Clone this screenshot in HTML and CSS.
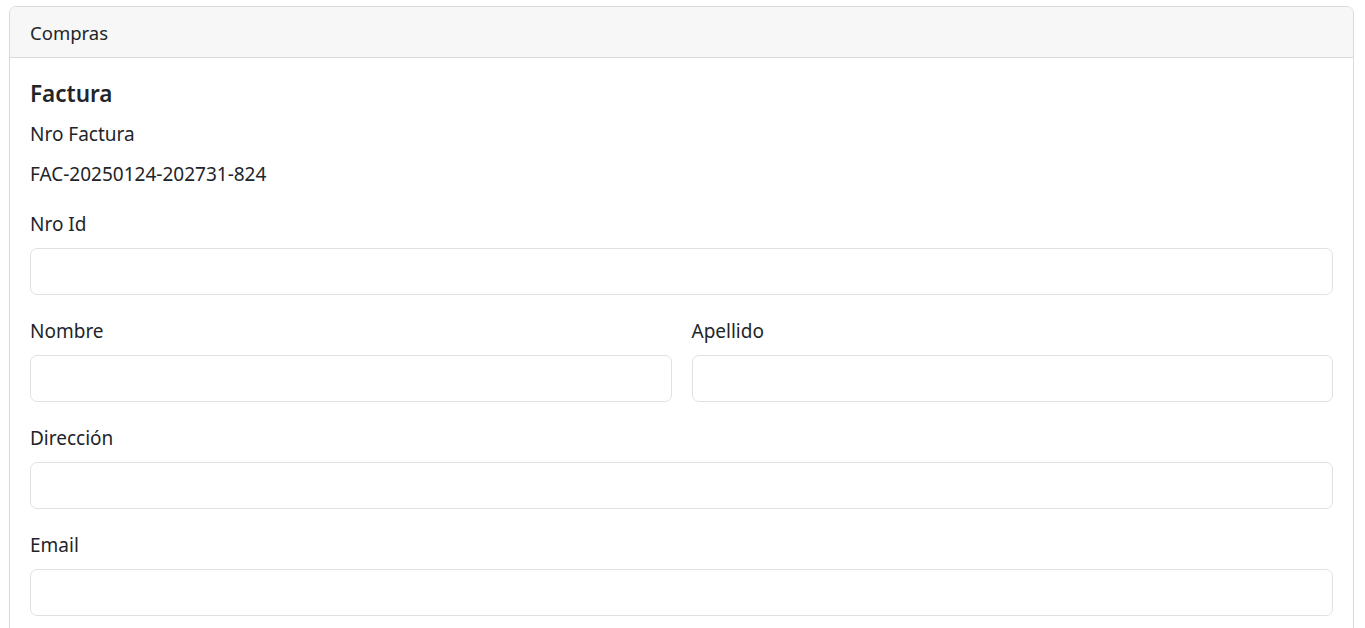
FILE: index.html
```html
<!DOCTYPE html>
<html lang="es">
<head>
<meta charset="utf-8">
<title>Compras</title>
<link rel="stylesheet" href="styles.css">
</head>
<body>
<div class="card">
  <div class="card-header">Compras</div>
  <div class="card-body">
    <h5 class="card-title">Factura</h5>
    <div class="form-label">Nro Factura</div>
    <p class="invoice">FAC-20250124-202731-824</p>
    <div class="field">
      <label class="form-label" for="nroid">Nro Id</label>
      <input class="form-control" id="nroid" type="text">
    </div>
    <div class="row field">
      <div class="col">
        <label class="form-label" for="nombre">Nombre</label>
        <input class="form-control" id="nombre" type="text">
      </div>
      <div class="col">
        <label class="form-label" for="apellido">Apellido</label>
        <input class="form-control" id="apellido" type="text">
      </div>
    </div>
    <div class="field">
      <label class="form-label" for="direccion">Dirección</label>
      <input class="form-control" id="direccion" type="text">
    </div>
    <div class="field">
      <label class="form-label" for="email">Email</label>
      <input class="form-control" id="email" type="email">
    </div>
  </div>
</div>
</body>
</html>
```
FILE: styles.css
```css
* { box-sizing: border-box; }
html, body { height: 100%; }
body {
  margin: 0;
  padding: 6px 11px 0 9px;
  font-family: "Noto Sans", "Open Sans", sans-serif;
  font-size: 19px;
  line-height: 30px;
  color: #212529;
  background: #fff;
  overflow: hidden;
}
.card {
  border: 1px solid #dadada;
  border-radius: 7px;
  background: #fff;
}
.card-header {
  padding: 11px 20px 9px;
  background: #f7f7f7;
  border-bottom: 1px solid #dadada;
  border-radius: 6px 6px 0 0;
  font-size: 18.5px;
}
.card-body {
  padding: 20px;
}
.card-title {
  margin: 0 0 9px;
  padding-top: 1px;
  font-size: 22.5px;
  line-height: 30px;
  font-weight: 600;
}
.form-label {
  display: block;
  padding-top: 1px;
  margin-bottom: 9px;
}
.invoice {
  padding-top: 1px;
  margin: 0 0 19px;
}
.field {
  margin-bottom: 20px;
}
.row {
  display: flex;
  gap: 20px;
}
.col {
  flex: 1 1 0;
  min-width: 0;
}
.form-control {
  display: block;
  width: 100%;
  height: 47px;
  padding: 7px 15px;
  font: inherit;
  color: #212529;
  background: #fff;
  border: 1px solid #dee2e6;
  border-radius: 7px;
  outline: none;
}
```
